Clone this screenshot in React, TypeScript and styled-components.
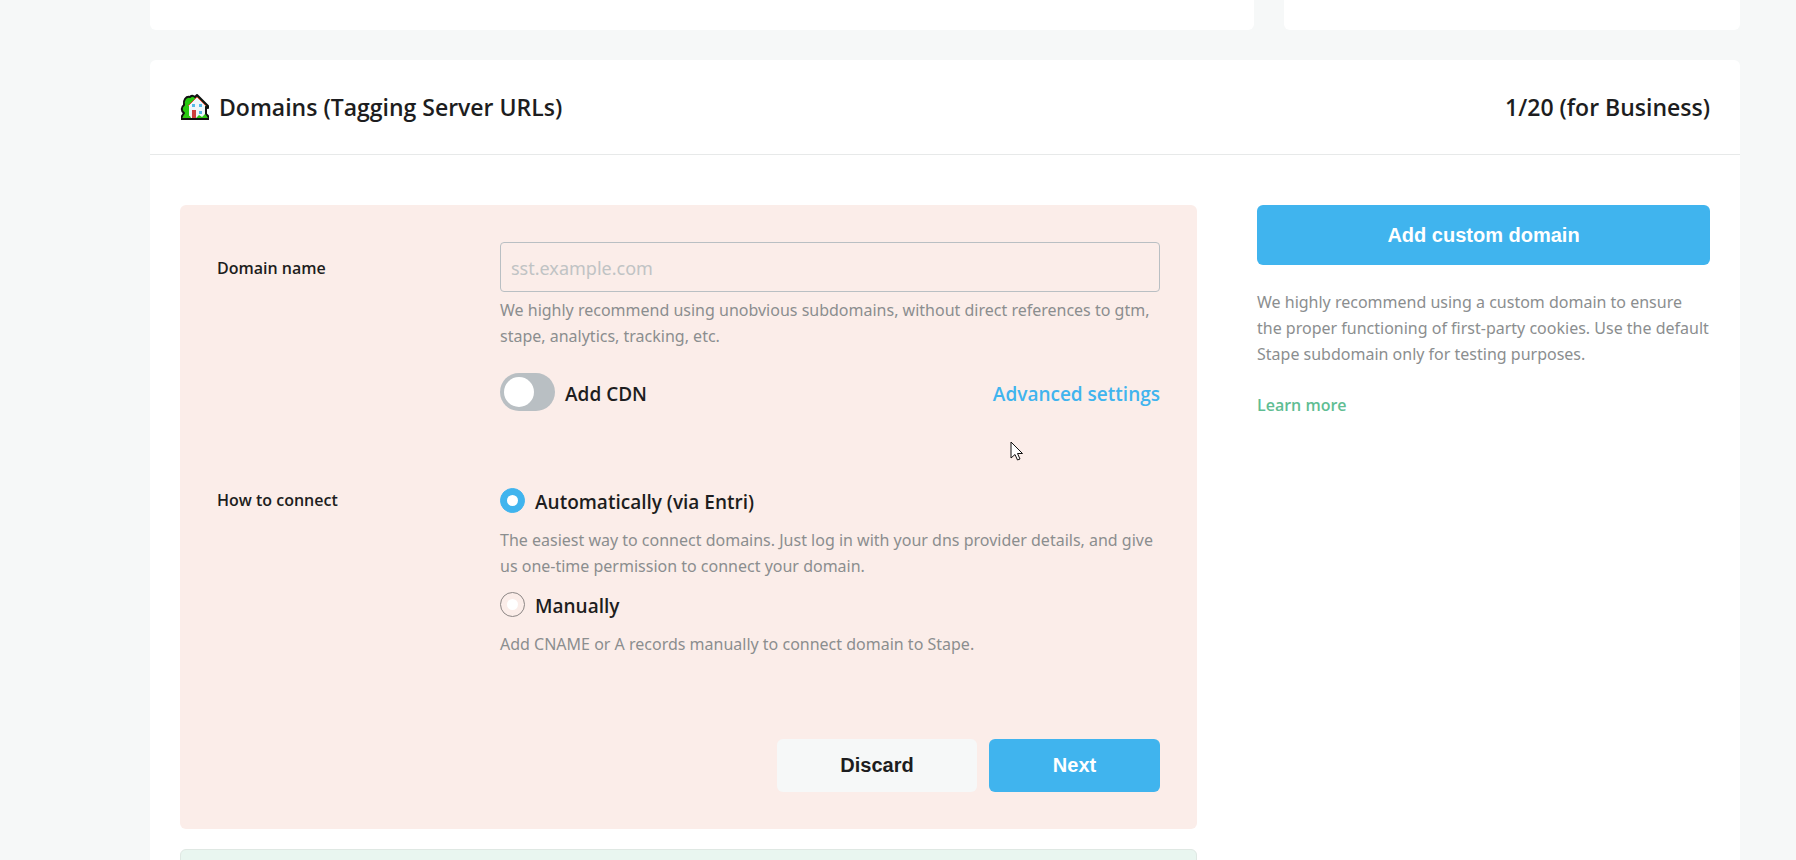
import React, { useState } from 'react';
import styled, { createGlobalStyle } from 'styled-components';

const font = '"Noto Sans", "Open Sans", sans-serif';
const headingFont = '"Open Sans", "Noto Sans", sans-serif';
const buttonFont = '"Liberation Sans", Arial, sans-serif';

const colors = {
  page: '#f6f8f8',
  ink: '#1d1d20',
  muted: '#8b8e8f',
  blue: '#40b4ee',
  green: '#5fbd93',
  line: '#e7e9e9',
  control: '#b9bfc3',
  draft: '#fbede9',
};

const GlobalStyle = createGlobalStyle`
  * { box-sizing: border-box; }
  body {
    margin: 0;
    overflow: hidden;
    background: ${colors.page};
    color: ${colors.ink};
    font-family: ${font};
    font-size: 16px;
    line-height: 26px;
  }
`;

const Page = styled.main`
  display: flex;
  flex-direction: column;
  gap: 30px;
  height: 100vh;
  padding: 0 56px 0 150px;
  overflow: hidden;
`;

const TopRow = styled.div`
  display: grid;
  flex: none;
  grid-template-columns: 1104fr 456fr;
  gap: 30px;
`;

const TopCard = styled.section`
  height: 30px;
  border-radius: 0 0 6px 6px;
  background: #fff;
`;

const Card = styled.section`
  display: flex;
  flex: 1;
  flex-direction: column;
  min-height: 0;
  border-radius: 6px 6px 0 0;
  background: #fff;
`;

const CardHeader = styled.header`
  display: flex;
  align-items: center;
  justify-content: space-between;
  padding: 31px 30px;
  border-bottom: 1px solid ${colors.line};
`;

const Title = styled.h2`
  display: flex;
  align-items: center;
  gap: 8px;
  margin: 0;
  font-family: ${headingFont};
  font-size: 23px;
  font-weight: 600;
  line-height: 32px;
`;

const CardBody = styled.div`
  display: grid;
  grid-template-columns: 1017fr 453fr;
  align-items: start;
  gap: 60px;
  padding: 50px 30px 0;
`;

const DomainList = styled.div`
  display: flex;
  flex-direction: column;
  gap: 20px;
`;

const DraftForm = styled.form`
  position: relative;
  padding: 37px;
  border-radius: 6px;
  background: ${colors.draft};
`;

const DomainRow = styled.div`
  height: 60px;
  border: 1px solid #dfe8e3;
  border-radius: 6px;
  background: #e9f6f0;
`;

const FieldRow = styled.div<{ $gap: number }>`
  display: grid;
  grid-template-columns: 283px 1fr;
  margin-bottom: ${(p) => p.$gap}px;
`;

const FieldLabel = styled.label<{ $top: number }>`
  padding-top: ${(p) => p.$top}px;
  font-family: ${headingFont};
  font-weight: 600;
`;

const TextInput = styled.input`
  display: block;
  width: 100%;
  height: 50px;
  padding: 2px 10px 0;
  border: 1px solid ${colors.control};
  border-radius: 4px;
  outline: none;
  background: transparent;
  color: ${colors.ink};
  font-family: inherit;
  font-size: 18px;

  &::placeholder {
    color: #c0c3c4;
    opacity: 1;
  }
`;

const Hint = styled.p<{ $top: number }>`
  margin: ${(p) => p.$top}px 0 0;
  color: ${colors.muted};
`;

const CdnRow = styled.div`
  display: flex;
  align-items: center;
  justify-content: space-between;
  margin-top: 24px;
`;

const OptionLabel = styled.label`
  display: flex;
  align-items: center;
  gap: 10px;
  font-family: ${headingFont};
  font-size: 19px;
  font-weight: 600;
`;

const OptionText = styled.span`
  padding-top: 4px;
  line-height: 22px;
`;

const Switch = styled.input`
  width: 55px;
  height: 38px;
  margin: 0;
  padding: 4px;
  border-radius: 19px;
  appearance: none;
  background: ${colors.control};

  &::before {
    display: block;
    width: 30px;
    height: 30px;
    border-radius: 50%;
    background: #fff;
    content: '';
  }

  &:checked { background: ${colors.blue}; }
  &:checked::before { margin-left: 17px; }
`;

const Radio = styled.input`
  display: grid;
  place-items: center;
  width: 25px;
  height: 25px;
  margin: 0;
  border: 1px solid #8c8685;
  border-radius: 50%;
  appearance: none;

  &::before {
    width: 11px;
    height: 11px;
    border-radius: 50%;
    background: #fff;
    content: '';
  }

  &:checked {
    border-color: ${colors.blue};
    background: ${colors.blue};
  }
`;

const Options = styled.div`
  display: flex;
  flex-direction: column;
  gap: 12px;
`;

const TextLink = styled.a<{ $tone: 'blue' | 'green' }>`
  padding-top: ${(p) => (p.$tone === 'blue' ? 4 : 0)}px;
  color: ${(p) => colors[p.$tone]};
  font-family: ${headingFont};
  font-size: ${(p) => (p.$tone === 'blue' ? 19 : 16)}px;
  font-weight: 600;
  text-decoration: none;
`;

const Actions = styled.div`
  display: flex;
  justify-content: flex-end;
  gap: 12px;
`;

const Button = styled.button<{ $primary?: boolean; $width: string; $height: number }>`
  width: ${(p) => p.$width};
  height: ${(p) => p.$height}px;
  padding: 0;
  border: 0;
  border-radius: 6px;
  background: ${(p) => (p.$primary ? colors.blue : colors.page)};
  color: ${(p) => (p.$primary ? '#fff' : colors.ink)};
  font-family: ${buttonFont};
  font-size: 20px;
  font-weight: 700;
`;

const Side = styled.aside`
  display: flex;
  flex-direction: column;
  align-items: flex-start;
`;

const SideText = styled.p`
  margin: 24px 0 25px;
  color: ${colors.muted};
`;

const Pointer = styled.svg`
  position: absolute;
  top: 236px;
  left: 830px;
  pointer-events: none;
`;

function House() {
  return (
    <svg width="31" height="30" viewBox="0 0 31 30" aria-hidden="true">
      <path d="M2 27V24L4 21C1 19 1 15 4 13C3 8 6 4 10 5C12 3 14 4 15 5L17 3L28 14V16L26 15V22L28 24V27Z" fill="#28c911" stroke="#111" strokeWidth="2" strokeLinejoin="round" />
      <path d="M9 13L17 5L25 13V26H9Z" fill="#f0f6fa" />
      <path d="M8 14L17 5L26 14" fill="none" stroke="#d9443a" />
      <path d="M12 18H16V26H12Z" fill="#cf3f3d" />
      <path d="M12 12H15V15H12ZM19 12H22V15H19ZM19 19H22V22H19Z" fill="#55b9e8" />
      <path d="M2 26L5 23L10 24L11 26ZM16 26L19 23L22 25L25 22L28 26Z" fill="#31c817" />
      <path d="M1 27H29" stroke="#111" strokeWidth="2" />
    </svg>
  );
}

export default function App() {
  const [method, setMethod] = useState('auto');
  return (
    <>
      <GlobalStyle />
      <Page>
        <TopRow>
          <TopCard />
          <TopCard />
        </TopRow>
        <Card>
          <CardHeader>
            <Title>
              <House />
              Domains (Tagging Server URLs)
            </Title>
            <Title as="div">1/20 (for Business)</Title>
          </CardHeader>
          <CardBody>
            <DomainList>
              <DraftForm onSubmit={(e) => e.preventDefault()}>
                <FieldRow $gap={76}>
                  <FieldLabel $top={13} htmlFor="domain">Domain name</FieldLabel>
                  <div>
                    <TextInput id="domain" type="text" placeholder="sst.example.com" />
                    <Hint $top={5}>
                      We highly recommend using unobvious subdomains, without direct references to gtm,
                      stape, analytics, tracking, etc.
                    </Hint>
                    <CdnRow>
                      <OptionLabel>
                        <Switch type="checkbox" />
                        <OptionText>Add CDN</OptionText>
                      </OptionLabel>
                      <TextLink $tone="blue" href="#advanced">Advanced settings</TextLink>
                    </CdnRow>
                  </div>
                </FieldRow>
                <FieldRow $gap={82}>
                  <FieldLabel as="div" id="connect" $top={0}>How to connect</FieldLabel>
                  <Options role="radiogroup" aria-labelledby="connect">
                    <div>
                      <OptionLabel>
                        <Radio type="radio" name="method" checked={method === 'auto'} onChange={() => setMethod('auto')} />
                        <OptionText>Automatically (via Entri)</OptionText>
                      </OptionLabel>
                      <Hint $top={14}>
                        The easiest way to connect domains. Just log in with your dns provider details, and give
                        us one-time permission to connect your domain.
                      </Hint>
                    </div>
                    <div>
                      <OptionLabel>
                        <Radio type="radio" name="method" checked={method === 'manual'} onChange={() => setMethod('manual')} />
                        <OptionText>Manually</OptionText>
                      </OptionLabel>
                      <Hint $top={14}>Add CNAME or A records manually to connect domain to Stape.</Hint>
                    </div>
                  </Options>
                </FieldRow>
                <Actions>
                  <Button type="button" $width="200px" $height={53}>Discard</Button>
                  <Button type="submit" $primary $width="171px" $height={53}>Next</Button>
                </Actions>
                <Pointer width="14" height="21" viewBox="0 0 14 21" aria-hidden="true">
                  <path d="M1 1V17L5 13.500L7.500 19L10 18L7.500 12.500H12.500Z" fill="#fff" stroke="#111" />
                </Pointer>
              </DraftForm>
              <DomainRow />
            </DomainList>
            <Side>
              <Button type="button" $primary $width="100%" $height={60}>Add custom domain</Button>
              <SideText>
                We highly recommend using a custom domain to ensure the&nbsp;proper functioning of
                first-party cookies. Use the default Stape subdomain only for testing purposes.
              </SideText>
              <TextLink $tone="green" href="#learn">Learn more</TextLink>
            </Side>
          </CardBody>
        </Card>
      </Page>
    </>
  );
}
